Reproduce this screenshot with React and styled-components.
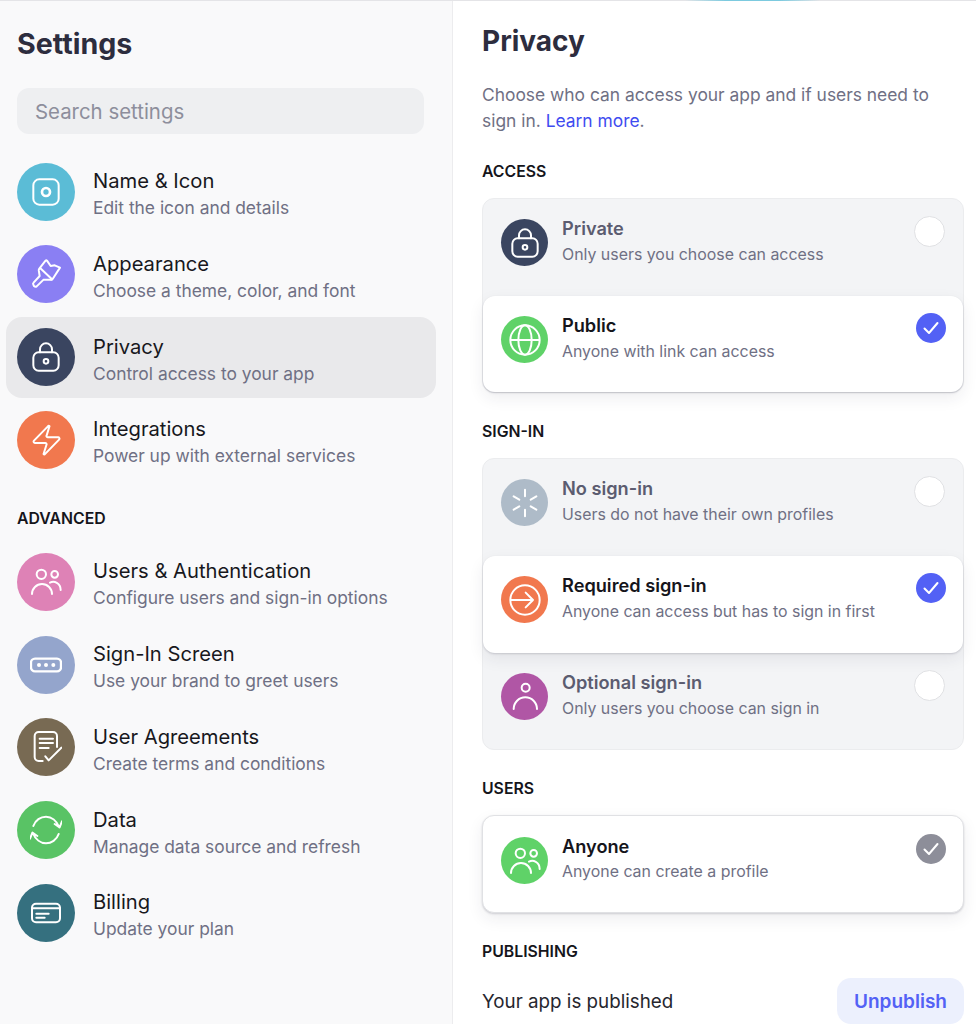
import React from 'react'
import styled, { createGlobalStyle } from 'styled-components'

const Global = createGlobalStyle`
  html, body { margin: 0; padding: 0; background: #fff; }
  body { font-family: Inter, "Liberation Sans", sans-serif; color: #15151b; }
  * { box-sizing: border-box; }
`

const Page = styled.div`
  position: relative;
  display: flex;
  width: 976px;
  height: 1024px;
  overflow: hidden;
  &::before {
    content: "";
    position: absolute;
    top: 0;
    left: 0;
    right: 0;
    height: 1px;
    background: #e4e4e7;
  }
`
const TopGlow = styled.div`
  position: absolute;
  z-index: 1;
  top: 0;
  left: 685px;
  width: 135px;
  height: 1px;
  background: linear-gradient(90deg, rgba(90,190,215,0), #7ccadf 30%, #7ccadf 70%, rgba(90,190,215,0));
`
const Sidebar = styled.aside`
  flex: 0 0 453px;
  padding: 25px 16px 0 6px;
  background: #f9f9fa;
  border-right: 1px solid #ececee;
`
const SideTitle = styled.h1`
  margin: 0 0 25px 11px;
  font-size: 28.6px;
  line-height: 38px;
  font-weight: 700;
  color: #2d2d3e;
`
const Search = styled.input`
  display: block;
  width: 407px;
  height: 46px;
  margin: 0 0 17px 11px;
  padding: 0 18px;
  border: 0;
  border-radius: 12px;
  background: #eeeff1;
  font: 400 20.4px Inter, sans-serif;
  outline: none;
  &::placeholder { color: #8d8e9c; opacity: 1; }
`
const NavRow = styled.div`
  display: flex;
  align-items: center;
  gap: 18px;
  width: 430px;
  height: 81px;
  margin-bottom: 1.75px;
  padding-left: 11px;
  border-radius: 16px;
  background: ${p => (p.$active ? '#e9e9eb' : 'transparent')};
`
const Circle = styled.div`
  flex: none;
  display: flex;
  align-items: center;
  justify-content: center;
  width: ${p => p.$size}px;
  height: ${p => p.$size}px;
  border-radius: 50%;
  background: ${p => p.$bg};
`
const NavText = styled.div`
  padding-top: 6px;
`
const NavTitle = styled.div`
  font-size: 20.2px;
  line-height: 26px;
  color: #18181d;
`
const NavSub = styled.div`
  margin-top: 1px;
  font-size: 17.4px;
  line-height: 26px;
  color: #6f7084;
`
const SideLabel = styled.div`
  margin: 29px 0 12px 11px;
  font-size: 15.8px;
  line-height: 20px;
  font-weight: 600;
  color: #15151b;
`
const Main = styled.main`
  flex: 1;
  padding: 22px 12px 0 29px;
`
const MainTitle = styled.h2`
  margin: 0 0 22px;
  font-size: 28px;
  line-height: 38px;
  font-weight: 700;
  color: #2d2d3e;
`
const Intro = styled.p`
  margin: 0 0 28px;
  font-size: 17.4px;
  line-height: 26px;
  color: #6f7084;
`
const Learn = styled.a`
  color: #3f4cf0;
`
const SectionLabel = styled.div`
  margin-bottom: 16px;
  font-size: 15.8px;
  line-height: 20px;
  font-weight: 600;
  color: #15151b;
`
const Group = styled.div`
  margin-bottom: 29px;
  border: 1px solid #ebecee;
  border-radius: 12px;
  background: #f3f4f6;
`
const Option = styled.div`
  display: flex;
  align-items: flex-start;
  height: 97px;
  padding: 20px 18px 0 18px;
  border-radius: 12px;
  background: ${p => (p.$selected ? '#fff' : 'transparent')};
  box-shadow: ${p => (p.$selected ? '0 1px 2px rgba(40,40,60,.18), 0 6px 16px rgba(40,40,60,.08)' : 'none')};
  &:last-child { height: 96px; }
`
const OptionText = styled.div`
  margin: -2px 0 0 14px;
`
const OptionTitle = styled.div`
  font-size: 18.2px;
  line-height: 22px;
  font-weight: 600;
  color: ${p => (p.$selected ? '#15151b' : '#5b5c70')};
`
const OptionSub = styled.div`
  margin-top: 5px;
  font-size: 15.9px;
  line-height: 22px;
  color: #6f7084;
`
const SingleCard = styled(Option)`
  height: 98px;
  &:last-child { height: 98px; }
  margin-bottom: 29px;
  padding: 21px 18px 0 18px;
  border: 1px solid #e0e1e4;
  ${OptionSub} { margin-top: 4px; }
`
const Radio = styled.div`
  flex: none;
  width: 31px;
  height: 31px;
  margin: -3px 0 0 auto;
  border: 1px solid #e0e1e4;
  border-radius: 50%;
  background: #fff;
`
const Check = styled.div`
  flex: none;
  display: flex;
  align-items: center;
  justify-content: center;
  width: 30px;
  height: 30px;
  margin: -3px -1px 0 auto;
  border-radius: 50%;
  background: ${p => p.$bg};
`
const PublishRow = styled.div`
  display: flex;
  align-items: center;
  justify-content: space-between;
`
const PublishText = styled.div`
  font-size: 18.8px;
  color: #26262e;
`
const Unpublish = styled.button`
  width: 127px;
  height: 46px;
  border: 0;
  border-radius: 14px;
  background: #ecf0fd;
  color: #5361f5;
  font: 600 19px Inter, sans-serif;
`

const Icon = ({ size = 32, children, sw = 1.5 }) => (
  <svg width={size} height={size} viewBox="0 0 24 24" fill="none" stroke="#fff" strokeWidth={sw} strokeLinecap="round" strokeLinejoin="round">
    {children}
  </svg>
)

const icons = {
  frame: <><rect x="2.5" y="2.5" width="19" height="19" rx="4.5" /><circle cx="12" cy="12" r="3" strokeWidth="2" /></>,
  brush: <><path d="M12.75 2 L15.5 6 L18.5 5.5 L22.5 7.25 L17 15.75 Q16.5 16.5 15.5 16.4 L10 16.4 L5 21.3 Q4 22 3 21 L2.5 20 Q2 19.2 2.7 18.5 L7.25 13.5 L6.6 9.5 Q6.5 8.7 7 8 L11.5 2.2 Q12.2 1.5 12.75 2 Z" /><path d="M7.75 7.75 L16.5 16" /></>,
  lock: <><rect x="2.5" y="8.5" width="19" height="13.75" rx="4" /><path d="M7.5 8.5V6.25a4.5 4.5 0 0 1 9 0V8.5" /><circle cx="12" cy="15.25" r="1.75" /></>,
  bolt: <path d="M3.8 14.2a1 1 0 0 1-.8-1.7l10.6-10.9a.5.5 0 0 1 .9.5l-2 6.4a1 1 0 0 0 1 1.5h7.5a1 1 0 0 1 .8 1.7l-10.6 10.9a.5.5 0 0 1-.9-.5l2-6.4a1 1 0 0 0-1-1.5z" />,
  users: <><circle cx="8.5" cy="6.25" r="3.5" /><circle cx="18.5" cy="6.25" r="2.5" /><path d="M1.5 21a7.5 7.5 0 0 1 15 0" /><path d="M15 12.5C18 11 23 12.5 23 18" /></>,
  keys: <><rect x=".75" y="7.25" width="22.5" height="9.5" rx="3" strokeWidth="1.75" /><circle cx="6.75" cy="12" r="1.5" fill="#fff" stroke="none" /><circle cx="12" cy="12" r="1.5" fill="#fff" stroke="none" /><circle cx="17.5" cy="12" r="1.5" fill="#fff" stroke="none" /></>,
  doc: <><path d="M9.5 22.5H6.5a3 3 0 0 1-3-3V3.75a3 3 0 0 1 3-3H17.25a3 3 0 0 1 3 3V12" /><path d="M7.25 5.75H17.25M7.25 9H17.25M7.25 12.75H14" /><path d="M11.5 19L14 22L23.5 12.5" /></>,
  refresh: <><path d="M2.5 9C4 4.5 8 2 12 2C16 2 20 5 22 10M18.5 7.5L22.2 10L24 5.5" /><g transform="rotate(180 12 12)"><path d="M2.5 9C4 4.5 8 2 12 2C16 2 20 5 22 10M18.5 7.5L22.2 10L24 5.5" /></g></>,
  card: <><rect x="1.5" y="5" width="21" height="14" rx="3" /><path d="M1.5 8.5H22.5M4.75 12.5H14M4.75 15.5H11" /></>,
  globe: <><circle cx="12" cy="12" r="11" /><ellipse cx="12" cy="12" rx="5" ry="11" /><path d="M1.5 12H22.5" /></>,
  spokes: <path d="M12 2v5M12 17v5M3.5 7l4.2 2.5M16.3 14.5l4.2 2.5M3.5 17l4.2-2.5M16.3 9.5l4.2-2.5" />,
  arrow: <><circle cx="12" cy="12" r="11" /><path d="M1.5 12H18M12.5 6.5L18 12L12.5 17.5" /></>,
  person: <><circle cx="12.5" cy="5" r="3" /><path d="M3.5 21a8.75 8.75 0 0 1 17.5 0" /></>,
}

const navMain = [
  { icon: 'frame', bg: '#5bbcd6', title: 'Name & Icon', sub: 'Edit the icon and details' },
  { icon: 'brush', bg: '#8a7ff3', title: 'Appearance', sub: 'Choose a theme, color, and font' },
  { icon: 'lock', bg: '#3a4560', title: 'Privacy', sub: 'Control access to your app', active: true },
  { icon: 'bolt', bg: '#f1784e', title: 'Integrations', sub: 'Power up with external services' },
]
const navAdvanced = [
  { icon: 'users', bg: '#de82b6', title: 'Users & Authentication', sub: 'Configure users and sign-in options' },
  { icon: 'keys', bg: '#94a5cc', title: 'Sign-In Screen', sub: 'Use your brand to greet users' },
  { icon: 'doc', bg: '#786a53', title: 'User Agreements', sub: 'Create terms and conditions' },
  { icon: 'refresh', bg: '#59c365', title: 'Data', sub: 'Manage data source and refresh' },
  { icon: 'card', bg: '#35707f', title: 'Billing', sub: 'Update your plan' },
]
const access = [
  { icon: 'lock', bg: '#3a4560', title: 'Private', sub: 'Only users you choose can access' },
  { icon: 'globe', bg: '#5fd268', title: 'Public', sub: 'Anyone with link can access', selected: true },
]
const signIn = [
  { icon: 'spokes', bg: '#aebbc8', title: 'No sign-in', sub: 'Users do not have their own profiles' },
  { icon: 'arrow', bg: '#f1784e', title: 'Required sign-in', sub: 'Anyone can access but has to sign in first', selected: true },
  { icon: 'person', bg: '#b056a5', title: 'Optional sign-in', sub: 'Only users you choose can sign in' },
]

const NavItem = ({ item }) => (
  <NavRow $active={item.active}>
    <Circle $size={58} $bg={item.bg}><Icon>{icons[item.icon]}</Icon></Circle>
    <NavText>
      <NavTitle>{item.title}</NavTitle>
      <NavSub>{item.sub}</NavSub>
    </NavText>
  </NavRow>
)

const CheckMark = ({ color }) => (
  <Check $bg={color}>
    <svg width="18" height="18" viewBox="0 0 18 18" fill="none" stroke="#fff" strokeWidth="2" strokeLinecap="round" strokeLinejoin="round">
      <path d="M2.5 9.5L7 14L15.5 4" />
    </svg>
  </Check>
)

const OptionBody = ({ item, selected }) => (
  <>
    <Circle $size={47} $bg={item.bg}><Icon>{icons[item.icon]}</Icon></Circle>
    <OptionText>
      <OptionTitle $selected={selected}>{item.title}</OptionTitle>
      <OptionSub>{item.sub}</OptionSub>
    </OptionText>
  </>
)

const App = () => {
  return (
    <>
      <Global />
      <Page>
        <TopGlow />
        <Sidebar>
          <SideTitle>Settings</SideTitle>
          <Search placeholder="Search settings" readOnly />
          {navMain.map(item => <NavItem key={item.title} item={item} />)}
          <SideLabel>ADVANCED</SideLabel>
          {navAdvanced.map(item => <NavItem key={item.title} item={item} />)}
        </Sidebar>
        <Main>
          <MainTitle>Privacy</MainTitle>
          <Intro>Choose who can access your app and if users need to sign in. <Learn>Learn more</Learn>.</Intro>
          <SectionLabel>ACCESS</SectionLabel>
          <Group>
            {access.map(item => (
              <Option key={item.title} $selected={item.selected}>
                <OptionBody item={item} selected={item.selected} />
                {item.selected ? <CheckMark color="#5361f5" /> : <Radio />}
              </Option>
            ))}
          </Group>
          <SectionLabel>SIGN-IN</SectionLabel>
          <Group>
            {signIn.map(item => (
              <Option key={item.title} $selected={item.selected}>
                <OptionBody item={item} selected={item.selected} />
                {item.selected ? <CheckMark color="#5361f5" /> : <Radio />}
              </Option>
            ))}
          </Group>
          <SectionLabel>USERS</SectionLabel>
          <SingleCard $selected>
            <OptionBody item={{ icon: 'users', bg: '#5fd268', title: 'Anyone', sub: 'Anyone can create a profile' }} selected />
            <CheckMark color="#8d8e99" />
          </SingleCard>
          <SectionLabel>PUBLISHING</SectionLabel>
          <PublishRow>
            <PublishText>Your app is published</PublishText>
            <Unpublish>Unpublish</Unpublish>
          </PublishRow>
        </Main>
      </Page>
    </>
  )
}

export default App
